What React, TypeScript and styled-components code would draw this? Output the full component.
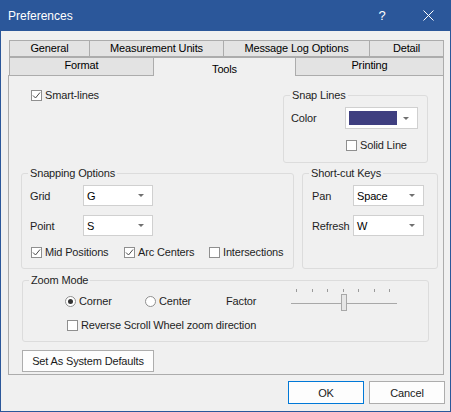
import React from 'react';
import styled, { createGlobalStyle } from 'styled-components';

const Global = createGlobalStyle`
  html, body { margin: 0; padding: 0; background: #ffffff; }
  body { font-family: "Liberation Sans", Arial, sans-serif; font-size: 11px; letter-spacing: -0.15px; color: #000; }
  * { box-sizing: border-box; }
`;

const Window = styled.div`
  width: 451px;
  height: 412px;
  display: flex;
  flex-direction: column;
  background: #f0f0f0;
  border: 1px solid #2b579a;
  border-top: none;
`;

const TitleBar = styled.div`
  height: 31px;
  flex: none;
  display: flex;
  align-items: center;
  background: #2b579a;
  color: #ffffff;
  padding-left: 8px;
  margin: 0 -1px;
`;

const TitleText = styled.div`
  flex: 1;
  font-size: 12px;
  letter-spacing: 0;
`;

const CaptionButton = styled.div`
  width: 46px;
  height: 31px;
  display: flex;
  align-items: center;
  justify-content: center;
  font-size: 13px;
`;

const Body = styled.div`
  flex: 1;
  display: flex;
  flex-direction: column;
  padding: 9px 6px 0 6px;
`;

const TabStrip = styled.div`
  display: flex;
  flex-direction: column;
  margin-left: 2px;
`;

const TabRow = styled.div<{ $cols: string; $h: number }>`
  display: grid;
  grid-template-columns: ${p => p.$cols};
  height: ${p => p.$h}px;
`;

const Tab = styled.div<{ $selected?: boolean; $closed?: boolean }>`
  display: flex;
  justify-content: center;
  align-items: ${p => (p.$selected ? 'center' : 'flex-start')};
  padding-top: ${p => (p.$selected ? '3px' : '1px')};
  background: ${p => (p.$selected ? '#f0f0f0' : '#e3e3e3')};
  border: 1px solid #acacac;
  border-left: none;
  border-bottom: ${p => (p.$closed ? '1px solid #acacac' : 'none')};
  color: #000;
  position: relative;
  z-index: ${p => (p.$selected ? 1 : 0)};
  margin-bottom: ${p => (p.$selected ? '-1px' : '0')};
  &:first-child { border-left: 1px solid #acacac; }
`;

const Panel = styled.div`
  height: 300px;
  border: 1px solid #acacac;
  display: flex;
  flex-direction: column;
  padding: 0 6px 0 12px;
  margin-left: 1px;
`;

const TopRow = styled.div`
  display: flex;
  justify-content: space-between;
  align-items: flex-start;
  height: 97px;
`;

const MidRow = styled.div`
  display: flex;
  gap: 8px;
`;

const Group = styled.div<{ $w: number; $h: number }>`
  position: relative;
  width: ${p => p.$w}px;
  height: ${p => p.$h}px;
  border: 1px solid #dcdcdc;
  border-radius: 3px;
  flex: none;
`;

const GroupTitle = styled.span`
  position: absolute;
  top: -9px;
  left: 6px;
  padding: 0 2px;
  line-height: 16px;
  background: #f0f0f0;
  color: #1e1e1e;
`;

const FieldGrid = styled.div<{ $cols: string; $pl: number }>`
  display: grid;
  grid-template-columns: ${p => p.$cols};
  row-gap: 9px;
  align-items: center;
  padding: 11px 0 0 ${p => p.$pl}px;
`;

const FieldLabel = styled.div`
  color: #1e1e1e;
`;

const Combo = styled.div<{ $w: number; $h: number }>`
  width: ${p => p.$w}px;
  height: ${p => p.$h}px;
  background: #ffffff;
  border: 1px solid #d0d0d0;
  display: flex;
  align-items: center;
  justify-content: space-between;
  padding: 0 8px 0 3px;
  color: #000;
`;

const Arrow = styled.span`
  width: 0;
  height: 0;
  border-left: 3px solid transparent;
  border-right: 3px solid transparent;
  border-top: 3px solid #707070;
`;

const Swatch = styled.span`
  width: 48px;
  height: 14px;
  background: #3f3f80;
`;

const CheckRow = styled.label<{ $ml?: number; $mt?: number }>`
  display: flex;
  align-items: center;
  gap: 3px;
  height: 14px;
  margin-left: ${p => p.$ml ?? 0}px;
  margin-top: ${p => p.$mt ?? 0}px;
  color: #1e1e1e;
  white-space: nowrap;
`;

const Box = styled.span`
  width: 11px;
  height: 11px;
  border: 1px solid #8f8f8f;
  background: #ffffff;
  display: flex;
  align-items: center;
  justify-content: center;
  flex: none;
`;

const Circle = styled.span`
  width: 11px;
  height: 11px;
  border: 1px solid #8f8f8f;
  border-radius: 50%;
  background: #ffffff;
  display: flex;
  align-items: center;
  justify-content: center;
  flex: none;
`;

const Dot = styled.span`
  width: 5px;
  height: 5px;
  border-radius: 50%;
  background: #333333;
`;

const CheckGrid = styled.div`
  grid-column: 1 / span 2;
  display: grid;
  grid-template-columns: 93px 85px auto;
  margin-left: 1px;
`;

const ZoomRow = styled.div`
  margin-top: 11px;
  margin-left: 1px;
`;

const RadioRow = styled.div`
  display: grid;
  grid-template-columns: 80px 81px 65px auto;
  grid-template-rows: 14px;
  align-items: center;
  height: 14px;
  margin-top: 13px;
  padding-left: 42px;
`;

const SliderBox = styled.div`
  position: relative;
  align-self: start;
  width: 106px;
  height: 22px;
  margin-top: -5px;
`;

const Ticks = styled.div`
  position: absolute;
  top: 0;
  left: 5px;
  width: 94px;
  display: flex;
  justify-content: space-between;
`;

const Tick = styled.span`
  width: 1px;
  height: 3px;
  background: #9a9a9a;
`;

const Track = styled.div`
  position: absolute;
  top: 14px;
  left: 0;
  width: 106px;
  height: 1px;
  background: #a8a8a8;
`;

const Thumb = styled.div`
  position: absolute;
  top: 5px;
  left: 50px;
  width: 6px;
  height: 17px;
  background: #e6e6e6;
  border: 1px solid #a8a8a8;
`;

const Button = styled.div<{ $w: number; $h: number; $default?: boolean }>`
  width: ${p => p.$w}px;
  height: ${p => p.$h}px;
  display: flex;
  align-items: center;
  justify-content: center;
  background: #fdfdfd;
  border: 1px solid ${p => (p.$default ? '#0078d7' : '#adadad')};
  color: #1a1a1a;
  flex: none;
`;

const DefaultsRow = styled.div`
  margin-top: 8px;
  margin-left: 1px;
`;

const Footer = styled.div`
  display: flex;
  justify-content: flex-end;
  gap: 5px;
  margin-top: 6px;
  margin-right: -1px;
`;

const Check = () => (
  <svg width="9" height="9" viewBox="0 0 9 9">
    <polyline points="1,4.5 3.5,7 8,1.5" fill="none" stroke="#4a4a4a" strokeWidth="1" />
  </svg>
);

const Checkbox: React.FC<{ checked?: boolean; label: string; ml?: number; mt?: number }> = ({ checked, label, ml, mt }) => (
  <CheckRow $ml={ml} $mt={mt}>
    <Box>{checked && <Check />}</Box>
    <span>{label}</span>
  </CheckRow>
);

const Radio: React.FC<{ checked?: boolean; label: string }> = ({ checked, label }) => (
  <CheckRow>
    <Circle>{checked && <Dot />}</Circle>
    <span>{label}</span>
  </CheckRow>
);

const ComboBox: React.FC<{ w: number; h: number; value?: string; swatch?: boolean }> = ({ w, h, value, swatch }) => (
  <Combo $w={w} $h={h}>
    {swatch ? <Swatch /> : <span>{value}</span>}
    <Arrow />
  </Combo>
);

export default function App() {
  return (
    <>
      <Global />
      <Window>
        <TitleBar>
          <TitleText>Preferences</TitleText>
          <CaptionButton>?</CaptionButton>
          <CaptionButton>
            <svg width="11" height="11" viewBox="0 0 11 11">
              <path d="M0.5 0.5 L10.5 10.5 M10.5 0.5 L0.5 10.5" stroke="#ffffff" strokeWidth="1" />
            </svg>
          </CaptionButton>
        </TitleBar>
        <Body>
          <TabStrip>
            <TabRow $cols="81px 134px 146px 74px" $h={17}>
              <Tab $closed>General</Tab>
              <Tab $closed>Measurement Units</Tab>
              <Tab $closed>Message Log Options</Tab>
              <Tab $closed>Detail</Tab>
            </TabRow>
            <TabRow $cols="145px 142px 148px" $h={18}>
              <Tab>Format</Tab>
              <Tab $selected>Tools</Tab>
              <Tab>Printing</Tab>
            </TabRow>
          </TabStrip>
          <Panel>
            <TopRow>
              <Checkbox checked label="Smart-lines" ml={10} mt={12} />
              <Group $w={145} $h={68} style={{ marginTop: 19, marginRight: 9 }}>
                <GroupTitle>Snap Lines</GroupTitle>
                <FieldGrid $cols="54px 73px" $pl={7}>
                  <FieldLabel>Color</FieldLabel>
                  <ComboBox w={73} h={22} swatch />
                  <span />
                  <Checkbox label="Solid Line" ml={1} />
                </FieldGrid>
              </Group>
            </TopRow>
            <MidRow>
              <Group $w={273} $h={96}>
                <GroupTitle>Snapping Options</GroupTitle>
                <FieldGrid $cols="53px 70px" $pl={8}>
                  <FieldLabel>Grid</FieldLabel>
                  <ComboBox w={70} h={21} value="G" />
                  <FieldLabel>Point</FieldLabel>
                  <ComboBox w={70} h={21} value="S" />
                  <CheckGrid>
                    <Checkbox checked label="Mid Positions" />
                    <Checkbox checked label="Arc Centers" />
                    <Checkbox label="Intersections" />
                  </CheckGrid>
                </FieldGrid>
              </Group>
              <Group $w={136} $h={96}>
                <GroupTitle>Short-cut Keys</GroupTitle>
                <FieldGrid $cols="41px 71px" $pl={9}>
                  <FieldLabel>Pan</FieldLabel>
                  <ComboBox w={71} h={21} value="Space" />
                  <FieldLabel>Refresh</FieldLabel>
                  <ComboBox w={71} h={21} value="W" />
                </FieldGrid>
              </Group>
            </MidRow>
            <ZoomRow>
              <Group $w={407} $h={62}>
                <GroupTitle>Zoom Mode</GroupTitle>
                <RadioRow>
                  <Radio checked label="Corner" />
                  <Radio label="Center" />
                  <FieldLabel>Factor</FieldLabel>
                  <SliderBox>
                    <Ticks>
                      {Array.from({ length: 7 }).map((_, i) => (
                        <Tick key={i} />
                      ))}
                    </Ticks>
                    <Track />
                    <Thumb />
                  </SliderBox>
                </RadioRow>
                <Checkbox label="Reverse Scroll Wheel zoom direction" ml={44} mt={10} />
              </Group>
            </ZoomRow>
            <DefaultsRow>
              <Button $w={132} $h={22}>Set As System Defaults</Button>
            </DefaultsRow>
          </Panel>
          <Footer>
            <Button $w={76} $h={23} $default>OK</Button>
            <Button $w={76} $h={23}>Cancel</Button>
          </Footer>
        </Body>
      </Window>
    </>
  );
}
